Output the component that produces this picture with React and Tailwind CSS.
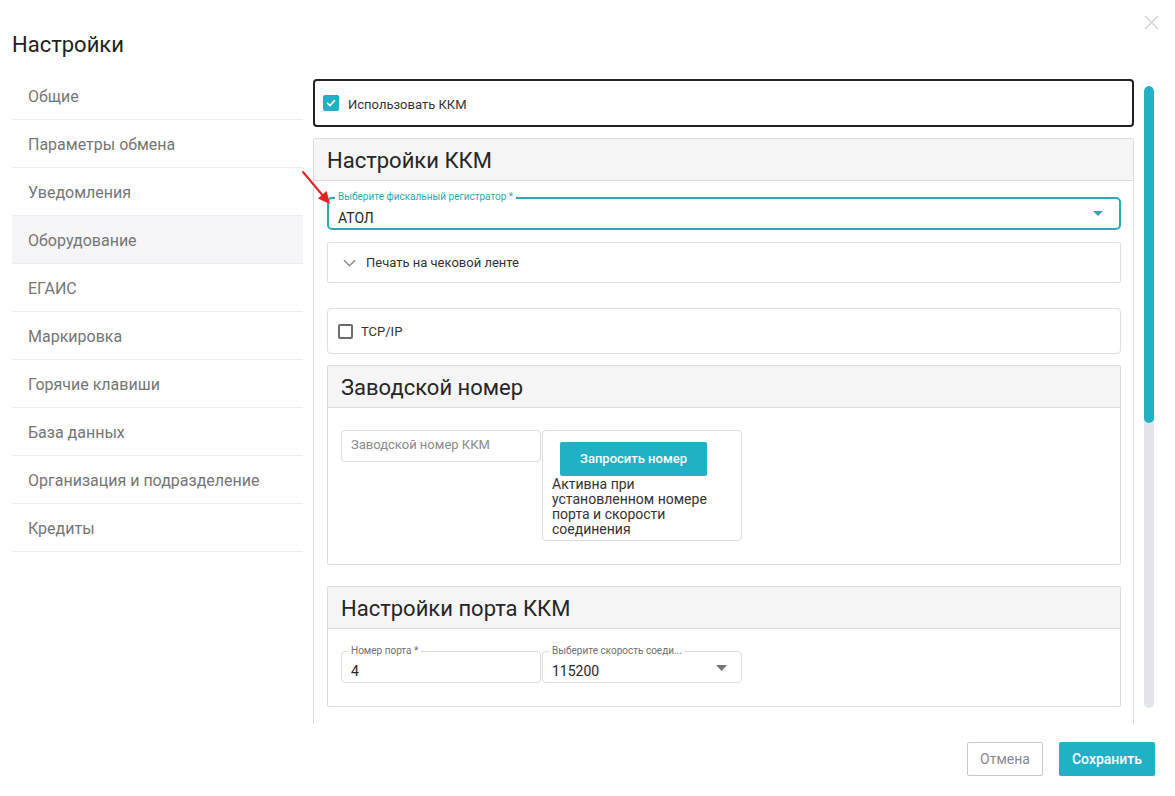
import React from 'react'

const nav = [
  'Общие',
  'Параметры обмена',
  'Уведомления',
  'Оборудование',
  'ЕГАИС',
  'Маркировка',
  'Горячие клавиши',
  'База данных',
  'Организация и подразделение',
  'Кредиты',
]

function Check({ on }) {
  if (on) {
    return (
      <span className="w-4 h-4 rounded-[2px] bg-[#21b1c6] flex items-center justify-center shrink-0">
        <svg width="12" height="12" viewBox="0 0 12 12" fill="none">
          <path d="M2.5 6.2l2.4 2.4 4.6-5" stroke="#fff" strokeWidth="1.6" strokeLinecap="round" strokeLinejoin="round" />
        </svg>
      </span>
    )
  }
  return <span className="w-[15px] h-[15px] rounded-[2px] border-2 border-[#6b6b6b] shrink-0" />
}

function Triangle({ color }) {
  return (
    <svg width="11" height="6" viewBox="0 0 11 6">
      <path d="M0 0h11L5.5 6z" fill={color} />
    </svg>
  )
}

function Panel({ title, className = '', children }) {
  return (
    <div className={'border border-[#dcdcdc] rounded-[2px] ' + className}>
      <div className="h-[42px] bg-[#f5f5f5] border-b border-[#dcdcdc] flex items-center px-[13px]">
        <span className="text-[22px] text-[#262626] leading-none mt-[2px]">{title}</span>
      </div>
      {children}
    </div>
  )
}

function Outlined({ label, value, select, className = '' }) {
  return (
    <div className={'relative h-[32px] border border-[#dcdcdc] rounded-[4px] flex items-center px-[9px] ' + className}>
      <span className="absolute -top-[7px] left-[6px] bg-white px-[3px] text-[10px] leading-[12px] text-[#6f6f6f] whitespace-nowrap">{label}</span>
      <span className="text-[14px] text-[#262626] mt-[8px]">{value}</span>
      {select && (
        <span className="ml-auto mr-[5px] mt-[1px]">
          <Triangle color="#757575" />
        </span>
      )}
    </div>
  )
}

export default function App() {
  return (
    <div className="w-[1175px] h-[796px] bg-white relative overflow-hidden flex flex-col" style={{ fontFamily: 'Roboto, "Noto Sans", sans-serif' }}>
      {/* Close */}
      <button className="absolute top-[15px] right-[16px]">
        <svg width="15" height="15" viewBox="0 0 15 15">
          <path d="M1 1l13 13M14 1L1 14" stroke="#d0d0d0" strokeWidth="1.3" />
        </svg>
      </button>

      {/* red pointer arrow */}
      <svg className="absolute left-[300px] top-[169px] z-10" width="34" height="38" viewBox="0 0 34 38">
        <path d="M3 3L24 28" stroke="#e0231f" strokeWidth="2" strokeLinecap="round" />
        <path d="M30 35L18 29.5l8.5-7.5z" fill="#e0231f" />
      </svg>

      <h1 className="pt-[31px] pl-[12px] text-[22px] leading-[28px] text-[#1f1f1f] font-normal">Настройки</h1>

      <div className="flex mt-[13px] h-[652px]">
        {/* Nav */}
        <div className="w-[291px] ml-[12px] shrink-0">
          {nav.map(n => (
            <div
              key={n}
              className={'h-[48px] border-b border-[#ebebeb] flex items-center pl-[16px] pt-[2px] text-[16px] text-[#767676] ' + (n === 'Оборудование' ? 'bg-[#f5f5f7]' : '')}
            >
              {n}
            </div>
          ))}
        </div>

        {/* Content */}
        <div className="w-[821px] ml-[10px] pt-[7px] overflow-hidden">
          <div className="h-[48px] border-2 border-[#222] rounded-[4px] flex items-center gap-[9px] px-[8px]">
            <Check on />
            <span className="text-[13px] text-[#333] mt-[3px]">Использовать ККМ</span>
          </div>

          <div className="mt-[11px] border border-[#dcdcdc] rounded-[2px] h-[700px]">
            <div className="h-[42px] bg-[#f5f5f5] border-b border-[#dcdcdc] flex items-center px-[13px]">
              <span className="text-[22px] text-[#262626] leading-none mt-[2px]">Настройки ККМ</span>
            </div>

            <div className="pl-[13px] pr-[12px] pt-[16px]">
              {/* fiscal select */}
              <div className="relative h-[33px] border-2 border-[#2aaab9] rounded-[5px] flex items-center px-[9px]">
                <span className="absolute -top-[8px] left-[6px] bg-white px-[3px] text-[10px] leading-[12px] text-[#2aaab9]">Выберите фискальный регистратор *</span>
                <span className="text-[14px] text-[#262626] mt-[9px]">АТОЛ</span>
                <span className="ml-auto mr-[7px] -mt-[1px]">
                  <svg width="10" height="5" viewBox="0 0 10 5">
                    <path d="M0 0h10L5 5z" fill="#2aaab9" />
                  </svg>
                </span>
              </div>

              {/* accordion */}
              <div className="mt-[12px] h-[41px] border border-[#e0e0e0] rounded-[2px] flex items-center pl-[15px] gap-[10px]">
                <svg width="13" height="8" viewBox="0 0 13 8">
                  <path d="M1 1.2l5.5 5.5L12 1.2" stroke="#8a8a8a" strokeWidth="1.4" fill="none" />
                </svg>
                <span className="text-[13px] text-[#333] mt-[1px]">Печать на чековой ленте</span>
              </div>

              {/* tcp */}
              <div className="mt-[25px] h-[46px] border border-[#e0e0e0] rounded-[4px] flex items-center pl-[10px] gap-[8px]">
                <Check />
                <span className="text-[13px] text-[#333] mt-[2px]">TCP/IP</span>
              </div>

              <Panel title="Заводской номер" className="mt-[11px] h-[200px]">
                <div className="flex pl-[13px] pt-[22px]">
                  <div className="w-[200px] h-[32px] border border-[#dcdcdc] rounded-[4px] flex items-center px-[9px]">
                    <span className="text-[13px] text-[#8a8a8a] -mt-[3px]">Заводской номер ККМ</span>
                  </div>
                  <div className="w-[200px] h-[111px] ml-[1px] border border-[#dcdcdc] rounded-[4px] px-[9px] pt-[11px]">
                    <button className="ml-[8px] w-[147px] h-[34px] bg-[#21b1c6] rounded-[2px] text-white text-[13px] font-medium">Запросить номер</button>
                    <p className="mt-[1px] w-[156px] text-[14px] leading-[15px] text-[#333]">Активна при установленном номере порта и скорости соединения</p>
                  </div>
                </div>
              </Panel>

              <Panel title="Настройки порта ККМ" className="mt-[21px] h-[121px]">
                <div className="flex pl-[13px] pt-[22px]">
                  <Outlined label="Номер порта *" value="4" className="w-[200px]" />
                  <Outlined label="Выберите скорость соеди..." value="115200" select className="w-[200px] ml-[1px]" />
                </div>
              </Panel>
            </div>
          </div>
        </div>

        {/* scrollbar */}
        <div className="ml-[10px] mt-[14px] w-[10px] h-[622px] rounded-full bg-[#e2e4ec] overflow-hidden">
          <div className="h-[337px] rounded-full bg-[#21b1c6]" />
        </div>
      </div>

      {/* footer */}
      <div className="flex justify-end gap-[16px] pr-[20px] mt-[18px]">
        <button className="w-[76px] h-[34px] border border-[#c8c8c8] rounded-[2px] text-[14px] text-[#8a8a8a]">Отмена</button>
        <button className="w-[96px] h-[34px] bg-[#21b1c6] rounded-[2px] text-[14px] text-white font-medium">Сохранить</button>
      </div>
    </div>
  )
}
